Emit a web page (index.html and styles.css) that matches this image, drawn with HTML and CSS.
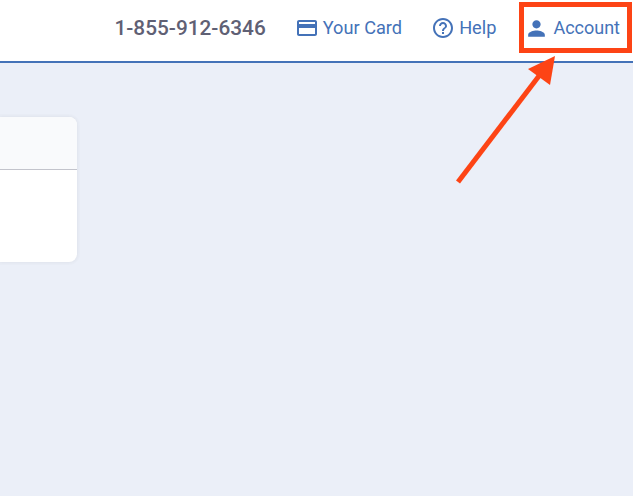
FILE: index.html
```html
<!DOCTYPE html>
<html lang="en">
<head>
<meta charset="utf-8">
<title>Account</title>
<link rel="stylesheet" href="styles.css">
</head>
<body>
<header class="topbar">
  <span class="phone">1-855-912-6346</span>
  <a class="navlink navlink-card" href="#">
    <svg class="icon" viewBox="0 0 24 24"><path d="M20 4H4c-1.11 0-1.99.89-1.99 2L2 18c0 1.11.89 2 2 2h16c1.11 0 2-.89 2-2V6c0-1.11-.89-2-2-2zm0 14H4v-6h16v6zm0-10H4V6h16v2z"/></svg>
    <span class="navlabel">Your Card</span>
  </a>
  <a class="navlink navlink-help" href="#">
    <svg class="icon" viewBox="0 0 24 24"><path d="M11 18h2v-2h-2v2zm1-16C6.48 2 2 6.48 2 12s4.48 10 10 10 10-4.48 10-10S17.52 2 12 2zm0 18c-4.41 0-8-3.59-8-8s3.59-8 8-8 8 3.59 8 8-3.59 8-8 8zm0-14c-2.21 0-4 1.79-4 4h2c0-1.1.9-2 2-2s2 .9 2 2c0 2-3 1.75-3 5h2c0-2.25 3-2.5 3-5 0-2.21-1.79-4-4-4z"/></svg>
    <span class="navlabel">Help</span>
  </a>
  <a class="navlink navlink-account" href="#">
    <svg class="icon icon-account" viewBox="0 0 24 24"><path d="M12 12c2.21 0 4-1.79 4-4s-1.79-4-4-4-4 1.79-4 4 1.79 4 4 4zm0 2c-2.67 0-8 1.34-8 4v2h16v-2c0-2.66-5.33-4-8-4z"/></svg>
    <span class="navlabel">Account</span>
  </a>
</header>
<main class="content">
  <section class="card">
    <div class="card-head"></div>
    <div class="card-body"></div>
  </section>
</main>
<div class="callout-box"></div>
<svg class="callout-arrow" viewBox="0 0 633 496">
  <line x1="458" y1="182" x2="542" y2="72" stroke="#fd4415" stroke-width="5"/>
  <polygon points="555,56 528,69 550,85" fill="#fd4415"/>
</svg>
</body>
</html>
```

FILE: styles.css
```css
* { box-sizing: border-box; }
html, body { margin: 0; padding: 0; }
body {
  position: relative;
  width: 633px;
  height: 496px;
  overflow: hidden;
  background: #ebeff8;
  font-family: Roboto, "Liberation Sans", sans-serif;
}
.topbar {
  display: flex;
  align-items: center;
  height: 63px;
  padding: 0 13px 5px 0;
  justify-content: flex-end;
  background: #fff;
  border-bottom: 2px solid #4472b8;
}
.phone {
  margin-right: 29px;
  font-size: 20.8px;
  font-weight: 500;
  color: #5f6074;
}
.navlink {
  display: flex;
  align-items: center;
  gap: 4px;
  font-size: 18.2px;
  color: #4472b8;
  text-decoration: none;
}
.navlabel { padding-bottom: 2px; }
.navlink-card { margin-right: 29px; }
.navlink-help { margin-right: 28px; }
.navlink-account { gap: 4px; font-size: 18px; }
.icon { width: 24px; height: 24px; fill: #4472b8; flex: none; }
.icon-account { width: 25px; height: 25px; }
.content { padding-top: 54px; }
.card {
  width: 77px;
  height: 145px;
  background: #fff;
  border-radius: 0 8px 8px 0;
  box-shadow: 0 0 0 3px rgba(0, 0, 0, 0.012), 0 0 3px rgba(0, 0, 0, 0.06);
  overflow: hidden;
  display: flex;
  flex-direction: column;
}
.card-head {
  height: 53px;
  background: #f9fafc;
  border-bottom: 1px solid #c3c4cc;
}
.card-body { flex: 1; }
.callout-box {
  position: absolute;
  left: 519px;
  top: 2px;
  width: 113px;
  height: 51px;
  border: 5px solid #fd4415;
}
.callout-arrow {
  position: absolute;
  left: 0;
  top: 0;
  width: 633px;
  height: 496px;
}
```
